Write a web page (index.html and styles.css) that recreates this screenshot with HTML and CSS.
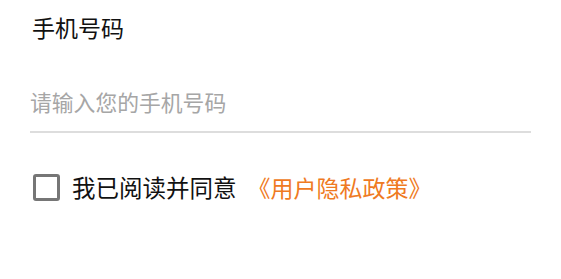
FILE: index.html
```html
<!DOCTYPE html>
<html lang="zh-CN">
<head>
<meta charset="utf-8">
<title>手机号码</title>
<link rel="stylesheet" href="styles.css">
</head>
<body>
<div class="page">
  <div class="label">手机号码</div>
  <div class="field">
    <input class="phone" type="tel" placeholder="请输入您的手机号码">
  </div>
  <label class="agree">
    <input class="check" type="checkbox">
    <span class="agree-text">我已阅读并同意</span>
    <span class="policy">《用户隐私政策》</span>
  </label>
</div>
</body>
</html>
```
FILE: styles.css
```css
html, body {
  margin: 0;
  padding: 0;
  background: #ffffff;
}
body {
  font-family: "Noto Sans CJK SC", "Noto Sans", sans-serif;
  color: #111111;
}
.page {
  width: 501px;
  padding: 10px 30px 0 30px;
  display: flex;
  flex-direction: column;
}
.label {
  font-size: 23px;
  line-height: 34px;
  padding-left: 2px;
}
.field {
  margin-top: 42px;
}
.phone {
  display: block;
  width: 100%;
  box-sizing: border-box;
  border: none;
  border-bottom: 2px solid #dddddd;
  outline: none;
  padding: 0 0 13px 0;
  margin: 0;
  font-family: "Noto Sans CJK SC", "Noto Sans", sans-serif;
  font-size: 21.8px;
  line-height: 32px;
  color: #111111;
  background: transparent;
}
.phone::placeholder {
  color: #a6a6a6;
}
.agree {
  display: flex;
  align-items: center;
  margin-top: 39px;
  padding-left: 3px;
}
.check {
  appearance: none;
  -webkit-appearance: none;
  width: 27px;
  height: 27px;
  box-sizing: border-box;
  border: 3px solid #767676;
  border-radius: 3px;
  margin: 0 12px 0 0;
  background: #ffffff;
}
.agree-text {
  font-size: 23.5px;
  line-height: 30px;
  color: #111111;
}
.policy {
  font-size: 23px;
  line-height: 30px;
  color: #ef7a22;
  margin-left: 11px;
}
```
